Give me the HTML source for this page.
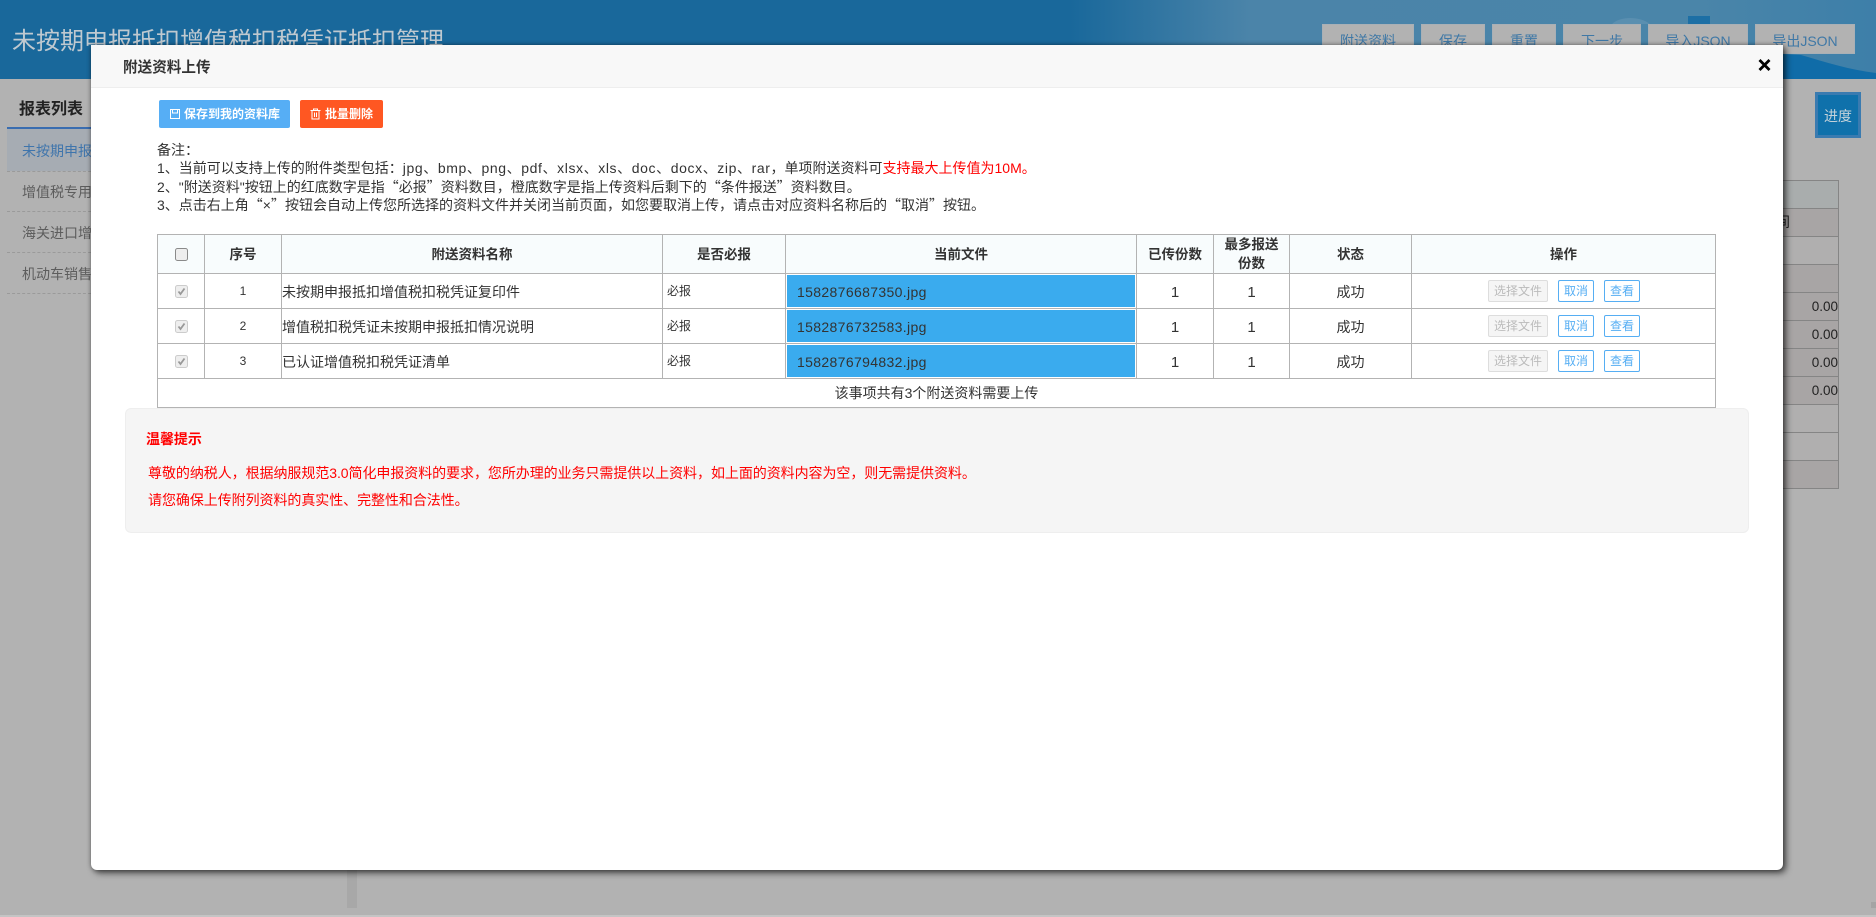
<!DOCTYPE html>
<html lang="zh"><head><meta charset="utf-8"><title>附送资料上传</title>
<style>
*{box-sizing:border-box}
html,body{margin:0;padding:0;width:1876px;height:917px;overflow:hidden;background:#b2b2b2;font-family:"Liberation Sans","Noto Sans CJK SC",sans-serif;font-size:14px;color:#333}
.a{position:absolute;white-space:nowrap}
#hd{left:0;top:0;width:1876px;height:79px;background:linear-gradient(90deg,#19689b 0,#19689b 1070px,#4b84a9 1250px,#4a85a9 1700px,#3d7fa9 1876px);overflow:hidden}
.tb{top:24px;height:30px;background:#b2b2b2;color:#3f78a6;text-align:center;line-height:32px;font-size:14px;border:1px solid #a9b0b6}
.side{left:22px;font-size:14px;line-height:20px;color:#5d5d5d;width:69px;overflow:hidden}
.dash{left:7px;width:84px;border-top:1px dashed #9a9a9a;height:0}
.rr{left:1700px;width:139px;height:29px;border:1px solid #858585;text-align:right;padding-right:0;font-size:13.5px;line-height:28px;color:#222}
#m{left:91px;top:45px;width:1692px;height:825px;background:#fff;border-radius:0 0 6px 6px;box-shadow:3px 3px 7px rgba(0,0,0,.6),0 0 4px rgba(0,0,0,.35)}
#mh{left:0;top:0;width:1692px;height:43px;background:#f8f8f8;border-bottom:1px solid #eee}
table{border-collapse:collapse;table-layout:fixed;position:absolute;left:157px;top:234px;width:1558px;font-size:14px;color:#333}
td,th{border:1px solid #b3b3b3;padding:0;text-align:center;vertical-align:middle;line-height:19px;overflow:hidden}
th{background:#f8fcfd;font-weight:700;color:#333;font-size:13.5px}
tr.h{height:39px}tr.r{height:35px}tr.f{height:29px}
tr.f td{border-bottom:2px solid #b3b3b3;font-size:14px;padding-top:2px}
td.n{text-align:left;font-size:14px;padding-top:3px}
td.s{font-size:12px;padding-top:1px}
td.b{text-align:left;font-size:12px;padding-left:4px;padding-top:1px}
td.v{font-size:15px;padding-top:2px}
td.file{text-align:left;padding:1px;}
td.file div{background:#3aabee;height:32px;line-height:34px;padding-left:10px;font-size:14px;letter-spacing:.35px;color:#333}
.btn{display:inline-block;height:22px;line-height:20px;border:1px solid #56aef3;border-radius:2px;color:#56aef3;font-size:12px;width:36px;text-align:center;margin-left:10px;vertical-align:middle}
.btn.d{width:60px;margin-left:0;background:#f5f5f5;border-color:#ddd;color:#bbb}
.ops{text-align:left;padding-left:76px}
.cb{display:block;margin:0 auto}
.note{left:157px;line-height:18px;font-size:14px;color:#333}
.q{font-family:"Noto Sans CJK SC",sans-serif}
.l{letter-spacing:.6px}
.red{color:#f00}
.tip{color:#f00;font-size:14px;line-height:20px;letter-spacing:-.06px}
</style></head><body>
<div class="a" id="hd">
<svg class="a" style="left:0;top:0" width="1876" height="79"><path d="M1783 54L1801 55C1825 62 1850 70 1876 73V79H1783Z" fill="#106ca8"/><rect x="1688" y="16" width="22" height="8" fill="#1d6fa5"/><path d="M1612 24C1620 16 1640 16 1650 24Z" fill="#5a8fb0"/></svg>
<div class="a" style="left:12px;top:24px;font-size:24px;line-height:36px;color:#bfc9d0">未按期申报抵扣增值税扣税凭证抵扣管理</div>
<div class="a tb" style="left:1322px;width:92px">附送资料</div>
<div class="a tb" style="left:1421px;width:64px">保存</div>
<div class="a tb" style="left:1492px;width:64px">重置</div>
<div class="a tb" style="left:1563px;width:78px">下一步</div>
<div class="a tb" style="left:1648px;width:100px">导入JSON</div>
<div class="a tb" style="left:1755px;width:100px">导出JSON</div>
</div>

<div class="a" style="left:19px;top:99px;font-size:16px;font-weight:700;line-height:22px;color:#222">报表列表</div>
<div class="a" style="left:7px;top:127px;width:84px;height:2px;background:#3a6db0"></div>
<div class="a" style="left:7px;top:129px;width:84px;height:42px;background:#a6acb3"></div>
<div class="a side" style="top:141px;color:#3f75ac">未按期申报</div>
<div class="a dash" style="top:171px"></div>
<div class="a side" style="top:182px">增值税专用</div>
<div class="a dash" style="top:211px"></div>
<div class="a side" style="top:223px">海关进口增</div>
<div class="a dash" style="top:252px"></div>
<div class="a side" style="top:264px">机动车销售</div>
<div class="a dash" style="top:293px"></div>

<div class="a" style="left:1815px;top:92px;width:46px;height:46px;background:#0f71ab;border:3px solid #3a7bb0;color:#c4d2da;text-align:center;line-height:42px;font-size:14px">进度</div>

<div class="a rr" style="top:180px;background:#a9adad"></div>
<div class="a rr" style="top:208px;background:#a8a5a5"></div>
<div class="a rr" style="top:236px;background:#b0afaf"></div>
<div class="a rr" style="top:264px;background:#a8a5a5"></div>
<div class="a rr" style="top:292px;background:#a8a5a5">0.00</div>
<div class="a rr" style="top:320px;background:#a8a5a5">0.00</div>
<div class="a rr" style="top:348px;background:#a8a5a5">0.00</div>
<div class="a rr" style="top:376px;background:#a8a5a5">0.00</div>
<div class="a rr" style="top:404px;background:#b0afaf"></div>
<div class="a rr" style="top:432px;background:#b0afaf"></div>
<div class="a rr" style="top:460px;background:#a8a5a5"></div>
<div class="a" style="left:1776px;top:212px;font-size:14px;line-height:20px;color:#222">间</div>

<div class="a" style="left:347px;top:860px;width:10px;height:48px;background:#a8a8a8"></div>
<div class="a" style="left:1871px;top:902px;width:5px;height:6px;background:#a4a4a4"></div>
<div class="a" style="left:0;top:915px;width:1876px;height:2px;background:#c4c4c4"></div>

<div class="a" id="m"><div class="a" id="mh"></div></div>

<div class="a" style="left:123px;top:57px;font-size:14.6px;font-weight:700;line-height:22px;color:#333">附送资料上传</div>
<svg class="a" style="left:1758px;top:59px" width="13" height="12"><path d="M1.5 1L11.5 11M11.5 1L1.5 11" stroke="#000" stroke-width="2.8" fill="none"/></svg>

<div class="a" style="left:159px;top:100px;width:131px;height:28px;background:#56aef5;border-radius:2px;color:#fff;font-size:12px;font-weight:700;line-height:29px;padding-left:25px">保存到我的资料库</div>
<svg class="a" style="left:170px;top:108px" width="11" height="12" fill="none" stroke="#fff" stroke-width="1"><path d="M.5 1.5H9.5V10.5H.5ZM2.5 1.5V5H7.5V1.5"/></svg>
<div class="a" style="left:300px;top:100px;width:83px;height:28px;background:#ff5722;border-radius:2px;color:#fff;font-size:12px;font-weight:700;line-height:29px;padding-left:25px">批量删除</div>
<svg class="a" style="left:310px;top:108px" width="11" height="12" fill="none" stroke="#fff" stroke-width="1"><path d="M.5 2.5H10.5M3.5 2.5V1H7.5V2.5M2 2.5V11H9V2.5M4.5 4.5V9M6.5 4.5V9"/></svg>

<div class="a note" style="top:141px">备注：</div>
<div class="a note" style="top:159px">1、当前可以支持上传的附件类型包括：<span class="l">jpg、bmp、png、pdf、xlsx、xls、doc、docx、zip、rar</span>，单项附送资料可<span class="red">支持最大上传值为10M。</span></div>
<div class="a note" style="top:178px">2、"附送资料"按钮上的红底数字是指<span class="q">“</span>必报<span class="q">”</span>资料数目，橙底数字是指上传资料后剩下的<span class="q">“</span>条件报送<span class="q">”</span>资料数目。</div>
<div class="a note" style="top:196px">3、点击右上角<span class="q">“</span>×<span class="q">”</span>按钮会自动上传您所选择的资料文件并关闭当前页面，如您要取消上传，请点击对应资料名称后的<span class="q">“</span>取消<span class="q">”</span>按钮。</div>

<table>
<colgroup><col style="width:47px"><col style="width:77px"><col style="width:381px"><col style="width:123px"><col style="width:351px"><col style="width:77px"><col style="width:76px"><col style="width:122px"><col style="width:304px"></colgroup>
<tr class="h"><th><svg class="cb" width="13" height="13"><rect x=".5" y=".5" width="12" height="12" rx="2" fill="#eee" stroke="#8a8a8a"/></svg></th><th>序号</th><th>附送资料名称</th><th>是否必报</th><th>当前文件</th><th>已传份数</th><th>最多报送<br>份数</th><th>状态</th><th>操作</th></tr>
<tr class="r"><td><svg class="cb" width="13" height="13"><rect x=".5" y=".5" width="12" height="12" rx="2" fill="#eee" stroke="#ccc"/><path d="M3.5 6.5L5.5 9L9.5 3.5" stroke="#999" stroke-width="1.8" fill="none"/></svg></td><td class="s">1</td><td class="n">未按期申报抵扣增值税扣税凭证复印件</td><td class="b">必报</td><td class="file"><div>1582876687350.jpg</div></td><td class="v">1</td><td class="v">1</td><td class="n" style="text-align:center">成功</td><td class="ops"><span class="btn d">选择文件</span><span class="btn">取消</span><span class="btn">查看</span></td></tr>
<tr class="r"><td><svg class="cb" width="13" height="13"><rect x=".5" y=".5" width="12" height="12" rx="2" fill="#eee" stroke="#ccc"/><path d="M3.5 6.5L5.5 9L9.5 3.5" stroke="#999" stroke-width="1.8" fill="none"/></svg></td><td class="s">2</td><td class="n">增值税扣税凭证未按期申报抵扣情况说明</td><td class="b">必报</td><td class="file"><div>1582876732583.jpg</div></td><td class="v">1</td><td class="v">1</td><td class="n" style="text-align:center">成功</td><td class="ops"><span class="btn d">选择文件</span><span class="btn">取消</span><span class="btn">查看</span></td></tr>
<tr class="r"><td><svg class="cb" width="13" height="13"><rect x=".5" y=".5" width="12" height="12" rx="2" fill="#eee" stroke="#ccc"/><path d="M3.5 6.5L5.5 9L9.5 3.5" stroke="#999" stroke-width="1.8" fill="none"/></svg></td><td class="s">3</td><td class="n">已认证增值税扣税凭证清单</td><td class="b">必报</td><td class="file"><div>1582876794832.jpg</div></td><td class="v">1</td><td class="v">1</td><td class="n" style="text-align:center">成功</td><td class="ops"><span class="btn d">选择文件</span><span class="btn">取消</span><span class="btn">查看</span></td></tr>
<tr class="f"><td colspan="9">该事项共有3个附送资料需要上传</td></tr>
</table>

<div class="a" style="left:125px;top:408px;width:1624px;height:125px;background:#f5f5f5;border:1px solid #eee;border-radius:6px"></div>
<div class="a tip" style="left:146px;top:429px;font-weight:700;font-size:14px">温馨提示</div>
<div class="a tip" style="left:148px;top:463px">尊敬的纳税人，根据纳服规范3.0简化申报资料的要求，您所办理的业务只需提供以上资料，如上面的资料内容为空，则无需提供资料。</div>
<div class="a tip" style="left:148px;top:490px">请您确保上传附列资料的真实性、完整性和合法性。</div>
</body></html>
